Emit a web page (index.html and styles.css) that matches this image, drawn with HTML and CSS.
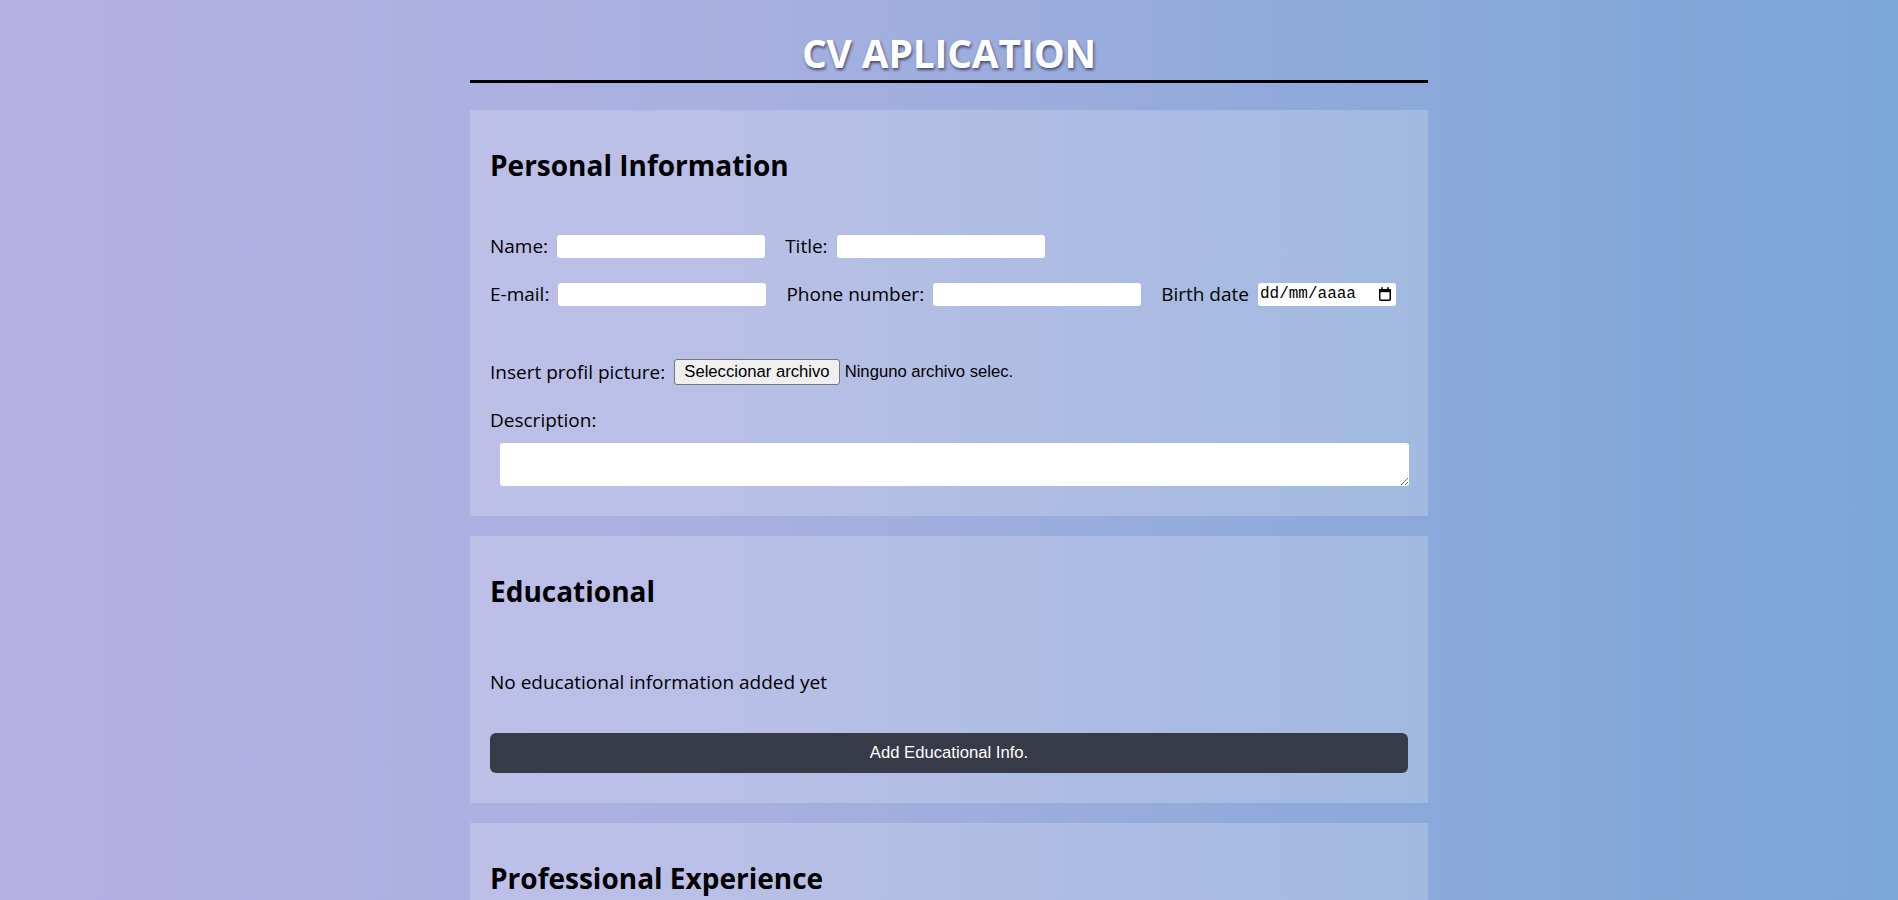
FILE: index.html
```html
<!DOCTYPE html>
<html lang="en">
<head>
<meta charset="utf-8">
<title>CV Aplication</title>
<link rel="stylesheet" href="styles.css">
</head>
<body>
<div class="page">
  <h1 class="app-title">CV APLICATION</h1>

  <section class="card">
    <h2 class="card-title">Personal Information</h2>
    <div class="rows">
      <div class="row">
        <label class="field">Name: <input class="text-input" type="text"></label>
        <label class="field">Title: <input class="text-input" type="text"></label>
      </div>
      <div class="row">
        <label class="field">E-mail: <input class="text-input" type="text"></label>
        <label class="field">Phone number: <input class="text-input" type="text"></label>
        <label class="field">Birth date
          <span class="date-input">
            <span class="date-text">dd/mm/aaaa</span>
            <svg class="cal-icon" width="14" height="16" viewBox="0 0 14 16" aria-hidden="true">
              <rect x="1.75" y="3.75" width="10.5" height="10.5" rx="1" fill="none" stroke="#000" stroke-width="1.5"/>
              <rect x="1" y="3" width="12" height="3.2" fill="#000"/>
              <rect x="3.2" y="1.2" width="1.6" height="3" fill="#000"/>
              <rect x="9.2" y="1.2" width="1.6" height="3" fill="#000"/>
            </svg>
          </span>
        </label>
      </div>
    </div>
    <div class="row file-row">
      <span class="field">Insert profil picture:
        <span class="file-picker">
          <span class="file-button">Seleccionar archivo</span>
          <span class="file-name">Ninguno archivo selec.</span>
        </span>
      </span>
    </div>
    <label class="desc-label" for="desc">Description:</label>
    <textarea class="desc-input" id="desc"></textarea>
  </section>

  <section class="card">
    <h2 class="card-title">Educational</h2>
    <p class="empty-text">No educational information added yet</p>
    <button class="add-button" type="button">Add Educational Info.</button>
  </section>

  <section class="card">
    <h2 class="card-title">Professional Experience</h2>
    <p class="empty-text">No professional experience added yet</p>
    <button class="add-button" type="button">Add Professional Experience</button>
  </section>
</div>
</body>
</html>
```

FILE: styles.css
```css
html {
  min-height: 100%;
  background: linear-gradient(to right, #b7b0e5 0%, #a7b0e0 40%, #8ea9da 70%, #7ba7d7 100%);
  background-attachment: fixed;
}

body {
  margin: 0;
  font-family: "Open Sans", "Noto Sans", sans-serif;
  font-size: 19px;
  color: #000;
}

.page {
  width: 958px;
  margin: 0 auto;
  padding-bottom: 40px;
}

.app-title {
  margin: 26px 0 27px;
  font-size: 39px;
  line-height: 54px;
  font-weight: 700;
  text-align: center;
  color: #fff;
  text-shadow: 1px 2px 3px rgba(40, 40, 80, 0.75);
  border-bottom: 3px solid #000;
  letter-spacing: -0.2px;
}

.card {
  background: rgba(255, 255, 255, 0.2);
  padding: 20px 20px 30px;
  margin-bottom: 20px;
}

.card-title {
  margin: 15px 0 0;
  font-size: 28px;
  line-height: 40px;
  font-weight: 700;
}

.rows {
  display: flex;
  flex-direction: column;
  gap: 16px;
  margin-top: 45px;
}

.row {
  display: flex;
  align-items: center;
  gap: 20px;
  height: 32px;
}

.field {
  display: flex;
  align-items: center;
  gap: 9px;
  line-height: 30px;
  white-space: nowrap;
}

.text-input {
  width: 208px;
  height: 23px;
  box-sizing: border-box;
  border: none;
  border-radius: 3px;
  background: #fff;
  padding: 0 4px;
  font: inherit;
  font-size: 16px;
}

.date-input {
  display: flex;
  align-items: center;
  justify-content: space-between;
  width: 138px;
  height: 23px;
  box-sizing: border-box;
  padding: 0 4px 0 2px;
  background: #fff;
  border-radius: 3px;
}

.date-text {
  font-family: "Liberation Mono", "DejaVu Sans Mono", monospace;
  font-size: 16px;
  line-height: 23px;
}

.cal-icon {
  display: block;
}

.file-row {
  margin-top: 46px;
}

.file-picker {
  display: flex;
  align-items: center;
  gap: 5px;
  font-family: "Liberation Sans", Arial, sans-serif;
  font-size: 16.67px;
}

.file-button {
  display: flex;
  align-items: center;
  height: 26px;
  box-sizing: border-box;
  padding: 0 9px;
  background: #efefef;
  border: 1px solid #767676;
  border-radius: 3px;
}

.desc-label {
  display: block;
  margin-top: 17px;
  line-height: 30px;
}

.desc-input {
  display: block;
  width: 909px;
  height: 43px;
  box-sizing: border-box;
  margin: 8px 0 0 10px;
  border: none;
  border-radius: 3px;
  background: #fff;
  font: inherit;
  font-size: 16px;
}

.empty-text {
  margin: 56px 0 0;
  line-height: 30px;
}

.add-button {
  display: block;
  width: 100%;
  height: 40px;
  margin-top: 36px;
  border: none;
  border-radius: 6px;
  background: #373a47;
  color: #fff;
  font-family: "Liberation Sans", Arial, sans-serif;
  font-size: 16.67px;
}
```
